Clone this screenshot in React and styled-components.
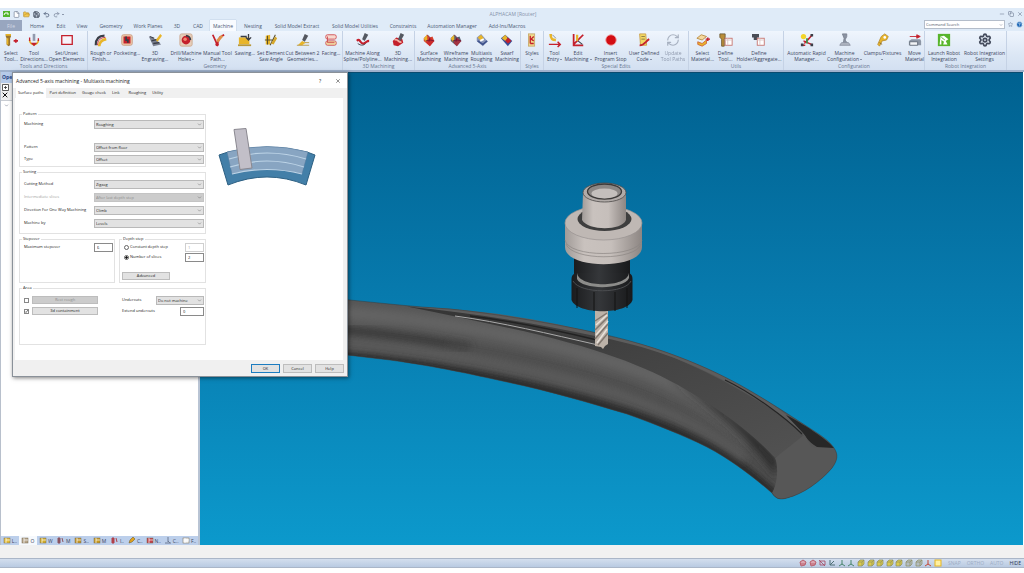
import React from 'react';
import styled, { createGlobalStyle } from 'styled-components';
import {
   ChevronDown, Undo2, Redo2, Save, File, FolderOpen, Settings, RefreshCw, X, Minus, Copy, CircleHelp, Star,
} from 'lucide-react';

const GlobalStyle = createGlobalStyle`
   * { box-sizing: border-box; }
   body {
      margin: 0;
      background: #ffffff;
      font-family: "Open Sans", "Noto Sans", sans-serif;
      font-size: 5px;
      line-height: 6px;
      color: #3c4660;
   }
   button, input, select { font: inherit; color: inherit; margin: 0; }
   svg { display: block; flex: none; }
`

const Window = styled.div`
   display: flex;
   flex-direction: column;
   min-height: 100vh;
   padding: 8px 0 5px;
   overflow: hidden;
`

/* ---------- title bar ---------- */

const TitleBar = styled.header`
   display: grid;
   grid-template-columns: 1fr auto 1fr;
   align-items: center;
   height: 12px;
   padding: 0 0 0 2px;
   background: #dfebf8;
   color: #8592aa;
`

const QuickAccess = styled.div`
   display: flex;
   align-items: center;
   gap: 2px;
`

const WindowButtons = styled.div`
   display: flex;
   justify-content: flex-end;
   gap: 1px;
`

const IconButton = styled.button`
   display: flex;
   align-items: center;
   justify-content: center;
   width: 8px;
   height: 8px;
   padding: 0;
   border: 0;
   background: none;
   color: ${p => p.$color || '#5d6b85'};
`

/* ---------- ribbon ---------- */

const TabRow = styled.nav`
   display: flex;
   height: 11px;
   padding-right: 1px;
   background: #dfebf8;
`

const RibbonTab = styled.button`
   width: ${p => p.$w}px;
   height: 11px;
   padding: 0;
   border: 0;
   white-space: nowrap;
   color: ${p => (p.$file ? '#d4dae6' : '#4a5873')};
   background: ${p => (p.$file ? '#98a6bf' : p.$active ? '#f8fbff' : 'transparent')};
   box-shadow: ${p => (p.$active ? '0 0 1px #8fa3c4' : 'none')};
`

const SearchArea = styled.div`
   display: flex;
   align-items: flex-start;
   gap: 1px;
   margin-left: auto;
`

const SearchBox = styled.label`
   display: flex;
   align-items: center;
   width: 81px;
   height: 9px;
   padding: 0 1px;
   border: 1px solid #b4bdca;
   background: #ffffff;
   font-size: 4px;
   input {
      flex: 1;
      min-width: 0;
      padding: 0;
      border: 0;
      outline: 0;
      background: none;
   }
   input::placeholder { color: #50586a; opacity: 1; }
`

const Ribbon = styled.section`
   display: flex;
   height: 39px;
   background: linear-gradient(#eff5fd, #dce7f5 60%, #d3e0f1);
`

const Group = styled.div`
   display: flex;
   flex-direction: column;
   border-right: 1px solid #c5d2e5;
`

const GroupButtons = styled.div`
   display: flex;
   flex: 1;
`

const GroupTitle = styled.div`
   height: 7px;
   text-align: center;
   color: #67768f;
`

const Tool = styled.button`
   display: flex;
   flex-direction: column;
   align-items: center;
   gap: 3px;
   width: ${p => p.$w}px;
   padding: 2px 0 0;
   border: 0;
   background: none;
   white-space: nowrap;
   opacity: ${p => (p.disabled ? 0.5 : 1)};
`

const ToolLabel = styled.span`
   display: flex;
   flex-direction: column;
   align-items: center;
   line-height: 6px;
`

const LastLine = styled.span`
   display: flex;
   align-items: center;
   gap: 1px;
   min-height: 6px;
`

const Caret = styled.i`
   border: 1px solid transparent;
   border-top-color: #3c4660;
   border-bottom: 0;
`

const RibbonEdge = styled.div`
   height: 2px;
   background: #9fb2cd;
`

/* ---------- workspace ---------- */

const Workspace = styled.main`
   position: relative;
   display: flex;
   flex: 1;
   min-height: 440px;
   padding-right: 1px;
`

const SidePanel = styled.aside`
   display: flex;
   flex-direction: column;
   width: 200px;
   border-left: 1px solid #b8c0cc;
   border-right: 2px solid #b9c4d4;
   background: #ffffff;
`

const PanelTitle = styled.h2`
   height: 11px;
   margin: 0;
   padding-left: 1px;
   background: #b6cbe9;
   color: #1c3f83;
   font-size: 5px;
   line-height: 11px;
`

const PanelTools = styled.div`
   display: flex;
   flex-direction: column;
   height: 18px;
   border-bottom: 1px solid #c8ccd2;
   background: #f0f0f0;
`

const Tree = styled.div`
   flex: 1;
   padding: 2px 3px;
`

const PanelTabs = styled.div`
   display: flex;
   height: 9px;
   background: #bccfeb;
`

const PanelTab = styled.button`
   display: flex;
   flex: 1;
   align-items: center;
   justify-content: center;
   gap: 1px;
   min-width: 0;
   padding: 0;
   border: 0;
   white-space: nowrap;
   background: ${p => (p.$active ? '#f6f9fd' : 'transparent')};
`

const Viewport = styled.div`
   flex: 1;
   min-width: 0;
   border-top: 1px solid #0a4c70;
   background: linear-gradient(#006190, #0779ac 45%, #0c99cc);
   svg { width: 100%; height: 100%; }
`

const CommandLine = styled.div`
   height: 13px;
   background: #f1f1f1;
`

const StatusBar = styled.footer`
   display: flex;
   align-items: center;
   justify-content: flex-end;
   gap: 6px;
   height: 10px;
   padding-right: 3px;
   border-top: 1px solid #aab6c8;
   border-bottom: 1px solid #aab6c8;
   background: linear-gradient(#d3deee, #b9cae2);
`

const StatusMarks = styled.div`
   display: flex;
   justify-content: space-between;
   width: 143px;
`

const Mode = styled.button`
   padding: 0;
   border: 0;
   background: none;
   color: ${p => (p.$on ? '#26344f' : '#9dacc4')};
`

/* ---------- dialog ---------- */

const Dialog = styled.section`
   position: absolute;
   top: 0;
   left: 12px;
   display: flex;
   flex-direction: column;
   width: 336px;
   border: 1px solid #8a9199;
   background: #f0f0f0;
   box-shadow: 1px 1px 4px rgba(0, 0, 0, 0.5);
   color: #222222;
   font-size: 4px;
`

const DialogTitle = styled.div`
   display: flex;
   align-items: center;
   height: 15px;
   padding: 0 0 0 3px;
   background: #ffffff;
   h1 {
      flex: 1;
      margin: 0;
      font-size: 5px;
      font-weight: 400;
   }
   button {
      width: 18px;
      font-size: 5px;
   }
`

const DialogTabs = styled.div`
   display: flex;
   gap: 2px;
   height: 10px;
   padding-left: 3px;
`

const DialogTab = styled.button`
   height: 10px;
   padding: 0 2px;
   border: 0;
   margin-left: ${p => (p.$apart ? 3 : 0)}px;
   background: ${p => (p.$active ? '#ffffff' : 'none')};
`

const DialogBody = styled.div`
   display: flex;
   gap: 12px;
   margin: 0 4px 0 2px;
   padding: 13px 4px 15px;
   background: #ffffff;
`

const Form = styled.form`
   display: flex;
   flex-direction: column;
   gap: 2px;
   width: 187px;
`

const Box = styled.fieldset`
   flex: ${p => p.$grow || '0 0 auto'};
   min-width: 0;
   height: ${p => p.$h}px;
   margin: 0;
   padding: ${p => p.$top || 0}px 1px 0 2px;
   border: 1px solid #e2e2e2;
   legend {
      height: 6px;
      padding: 0 1px;
   }
`

const Row = styled.div`
   display: flex;
   align-items: center;
   height: 10px;
   padding-left: 2px;
   margin-bottom: ${p => p.$gap || 0}px;
   color: ${p => (p.$off ? '#a2a2a2' : 'inherit')};
   label { flex: 1; white-space: nowrap; }
`

const SelectWrap = styled.span`
   position: relative;
   width: ${p => p.$w || 110}px;
   height: 9px;
   select {
      appearance: none;
      display: block;
      width: 100%;
      height: 9px;
      padding: 0 8px 0 1px;
      border: 1px solid ${p => (p.$off ? '#c4c4c4' : '#b9b9b9')};
      border-radius: 0;
      background: ${p => (p.$off ? '#cccccc' : '#e2e2e2')};
      color: ${p => (p.$off ? '#8c8c8c' : 'inherit')};
      line-height: 7px;
      opacity: 1;
   }
   svg {
      position: absolute;
      top: 2px;
      right: 2px;
      pointer-events: none;
   }
`

const NumberBox = styled.input`
   width: ${p => p.$w || 19}px;
   height: 9px;
   padding: 0 2px;
   border: 1px solid ${p => (p.disabled ? '#cfcfcf' : '#8a8a8a')};
   background: #ffffff;
   color: ${p => (p.disabled ? '#9a9a9a' : 'inherit')};
`

const Radio = styled.input`
   appearance: none;
   width: 5px;
   height: 5px;
   border: 1px solid #666666;
   border-radius: 50%;
   background: #ffffff;
   &:checked { background: radial-gradient(circle, #111111 45%, #ffffff 60%); }
   && { margin: 0 1px 0 0; }
`

const CheckWrap = styled.span`
   position: relative;
   display: flex;
   margin-right: 3px;
   input {
      appearance: none;
      width: 5px;
      height: 5px;
      border: 1px solid #888888;
      background: #ffffff;
   }
   svg { position: absolute; inset: 0; pointer-events: none; }
`

const PushButton = styled.button`
   width: ${p => p.$w || 29}px;
   height: ${p => p.$h || 8}px;
   padding: 0;
   border: 1px solid ${p => (p.$primary ? '#1c7cc0' : '#bdbdbd')};
   background: ${p => (p.disabled ? '#cccccc' : '#e2e2e2')};
   color: ${p => (p.disabled ? '#8f8f8f' : 'inherit')};
   line-height: 6px;
`

const Pair = styled.div`
   display: flex;
   gap: 4px;
`

const AreaGrid = styled.div`
   display: grid;
   grid-template-columns: 98px 1fr;
   row-gap: 1px;
`

const DialogFooter = styled.div`
   display: flex;
   justify-content: flex-end;
   gap: 3px;
   padding: 4px 3px 3px 0;
`

/* ---------- ribbon pictures ---------- */

const red = '#c4202c'
const gold = '#e8b52a'
const ink = '#3a3d46'

const cube = accent => (
   <>
      <path d="M2 6l4-4 3 3 3-1 2 5-5 6-7-6z" fill={accent} />
      <path d="M2 6l4-4v6l-2 2z" fill={gold} />
      <path d="M9 5l5 4-5 6-4-4z" fill={red} fillOpacity="0.7" />
      <path d="M6 2l3 3-1 5M4 9l5-1 5 1" stroke="#613" strokeWidth="0.8" fill="none" />
   </>
)

const art = {
   select: <><path d="M2 1h6v3L7 6v8l-2 1-2-2V6L2 4z" fill="#9b742d" /><path d="M2 2h6M4 6v7" stroke={gold} strokeWidth="2" /><path d="M11 9h5M13.500 7v4" stroke={red} strokeWidth="2" /></>,
   direction: <><path d="M8 1v8" stroke="#929aae" strokeWidth="3" /><path d="M3 8c0 7 10 7 10 0" stroke={gold} strokeWidth="2" fill="none" /><path d="M3 5v4M8 14l-2-2h4zM13 6v3" stroke={red} strokeWidth="1.500" fill={red} /></>,
   rect: <path d="M2 3h12v10H2z" stroke={red} strokeWidth="1.500" fill="#f6f3fa" />,
   rough: <><path d="M2 14C2 6 6 3 12 3" stroke={ink} strokeWidth="2.500" fill="none" /><path d="M6 15c0-5 3-7 8-8" stroke={gold} strokeWidth="3" fill="none" /><path d="M4 14C4 8 8 5 13 5" stroke={red} strokeWidth="1" fill="none" /></>,
   pocket: <><rect x="2" y="2" width="12" height="12" rx="2" fill="#efc9a9" stroke="#c99a80" /><rect x="4" y="4" width="8" height="8" fill={red} /><path d="M7 4v4h2v3" stroke={ink} strokeWidth="2" fill="none" /></>,
   engrave: <><path d="M1 4l8 3 6 6-9 2z" fill="#7c8292" /><path d="M2 4l5 2M4 9l8-2M6 12l7-1" stroke={ink} strokeWidth="1.500" /><path d="M9 8l5-7 2 2-5 7z" fill={gold} /></>,
   drill: <><rect x="1" y="1" width="14" height="14" rx="2" fill="#e6cdb9" stroke="#cba88f" /><circle cx="8" cy="8" r="5" fill={red} /><circle cx="7" cy="7" r="2" fill="#f0866e" /><path d="M8 3a5 5 0 015 5" stroke={ink} strokeWidth="2" fill="none" /></>,
   manual: <><path d="M2 2l5 11 3-8 5-3" stroke={red} strokeWidth="2" fill="none" /><path d="M6 8l6-6 2 2-6 7z" fill="#e0904a" /><circle cx="7" cy="13" r="2" fill={red} /></>,
   saw: <><path d="M1 5h12v8H1z" fill={gold} /><path d="M0 14h15" stroke="#b8983a" strokeWidth="2" /><path d="M3 4h7M12 1v6M9 5l3 3 3-3" stroke={ink} strokeWidth="1.500" fill="none" /></>,
   angle: <><path d="M2 3l5-1v11H2z" fill={gold} /><path d="M4 3v10M1 8h12M7 14l6-12" stroke="#5b502b" strokeWidth="1.200" /><path d="M8 12l5-8 2 2-4 7z" fill="#d6a82c" /></>,
   cut: <><path d="M10 1l4 2-4 7-3-2z" fill="#54575f" /><path d="M2 14l5-5 4 2-4 3z" fill={gold} /><path d="M1 14h14M10 11h5" stroke="#b69542" /></>,
   facing: <><rect x="2" y="2" width="12" height="5" rx="2" fill="#f7d8ce" stroke="#cf4a50" /><rect x="2" y="9" width="12" height="5" rx="2" fill="#f0dfa6" stroke="#cf4a50" /><path d="M4 4v7h8" stroke="#cf4a50" fill="none" /></>,
   spline: <><path d="M10 0l4 2-4 7-3-2z" fill="#555962" /><path d="M1 9c4-4 4 5 8 3s3-3 6-3" stroke={red} strokeWidth="2.500" fill="none" /><path d="M2 12c4 3 7 2 9 0" stroke={ink} fill="none" /></>,
   machining3d: <><path d="M2 9l4-4 7 2 1 4-6 4-5-1z" fill={red} /><path d="M4 8c4-2 5 4 8 2" stroke="#f4b0a2" strokeWidth="2" fill="none" /><path d="M11 0l4 2-4 7-3-2z" fill="#555962" /></>,
   surface: cube('#d9432c'),
   wire: cube('#56606f'),
   multi: <><path d="M2 5l5-4 7 8-5 6-7-6z" fill="#8794b8" /><path d="M3 5l4-3 3 4-3 3z" fill={gold} /><path d="M3 9l6 4 5-4" stroke="#3f538d" strokeWidth="2" fill="none" /><path d="M6 9l4-2" stroke="#fff" strokeWidth="2" /></>,
   swarf: <><path d="M1 6l5-4 8 7-5 6z" fill="#374c96" /><path d="M2 6l4-4 3 4-3 3z" fill={gold} /><path d="M6 9l3-4 4 4-4 3z" fill={red} /></>,
   styles: <><rect x="4" y="1" width="7" height="14" fill="#f1dc8c" stroke="#c7a96c" /><path d="M6 3v9M10 4l-3 3 3 2M6 12h4" stroke={red} strokeWidth="1.500" fill="none" /></>,
   entry: <><path d="M3 1c0 6 2 7 6 7" stroke={gold} strokeWidth="3" fill="none" /><path d="M1 13h13M11 10l3 3-3 3" stroke={red} strokeWidth="1.700" fill="none" /><path d="M5 2l4 4" stroke="#808390" /></>,
   edit: <><path d="M3 1v13h11M3 13L14 2" stroke={red} strokeWidth="2" fill="none" /><path d="M7 2v7" stroke={gold} strokeWidth="2.500" /><path d="M8 9l5 4" stroke={ink} strokeWidth="1.200" /></>,
   stop: <circle cx="8" cy="8" r="6" fill="#d30d13" stroke="#ef9a9c" />,
   code: <><path d="M3 1h7l1 13H4z" fill="#f2d763" stroke="#caa048" /><path d="M5 4h4M5 7h4" stroke="#857646" /><path d="M3 14c6 0 7-5 11-7" stroke={red} strokeWidth="2" fill="none" /></>,
   material: <><path d="M1 6l5-4 6 2-5 4z" fill="#f5d9a0" stroke="#b7893e" /><path d="M2 10l5 2 5-4v4l-5 3-5-2z" fill={gold} stroke="#d0653a" /><path d="M11 7h5M13.500 5v4" stroke={red} strokeWidth="1.700" /></>,
   defTool: <><path d="M1 1h6v4L6 7v8H3V7L1 5z" fill="#b98d39" stroke="#6f5d36" /><rect x="7" y="6" width="8" height="8" fill="#fff" stroke="#c4706b" /><path d="M7 8h8M10 6v8" stroke="#dcc3c3" /></>,
   defHolder: <><path d="M0 1h8v4H6v3H2V5H0z" fill="#4a4d56" /><rect x="6" y="6" width="8" height="8" fill="#fff" stroke="#c4706b" /><path d="M6 8h8M9 6v8" stroke="#dcc3c3" /></>,
   rapid: <><circle cx="4" cy="4" r="3" fill="#f3d52b" /><path d="M5 12l8-9M3 14h3M4 9l9 4M9 8l5-6" stroke={red} strokeWidth="1.500" /><path d="M12 1h3v3h-3zM12 12h3v3h-3zM1 12h3v3H1z" fill={ink} /><path d="M8 6v6" stroke="#3b924b" strokeWidth="2" /></>,
   machine: <><path d="M5 1h5v3L8 8l3 4H6l1-6z" fill="#8b93a2" stroke="#7a8190" /><path d="M2 14h12l-2-3H4z" fill="#b1b7c2" stroke="#8a91a0" /></>,
   clamp: <><path d="M10 1l4 3-2 4-5 1-3 6-2-2 4-9z" fill={gold} stroke="#b98f36" /><circle cx="10" cy="5" r="1.500" fill="#fff" /><path d="M4 11l3 2" stroke="#7d6226" /></>,
   move: <><path d="M2 4h9M10 2l4 2-4 2z" stroke={red} fill={red} /><path d="M1 9l3-2h10l1 2v5H1z" fill="#8d96a5" /><path d="M2 10h9v4H2z" fill="#f2f4f7" stroke="#606978" /></>,
   launch: <><rect x="1" y="1" width="14" height="14" fill="#58b52c" /><path d="M4 4l4-1 5 4-3 2 2 4H7l1-3-3-2v5H3z" fill="#fff" /><path d="M5 5l4 3" stroke="#58b52c" /></>,
}

const ribbonTabs = [
   ['File', 22], ['Home', 30], ['Edit', 18], ['View', 24], ['Geometry', 34], ['Work Planes', 40], ['3D', 18],
   ['CAD', 24], ['Machine', 26], ['Nesting', 34], ['Solid Model Extract', 54], ['Solid Model Utilities', 62],
   ['Constraints', 34], ['Automation Manager', 64], ['Add-Ins/Macros', 46],
]

// [first line, second line, width, picture, drop-down?, disabled?]
const ribbonGroups = [
   ['Tools and Directions', [
      ['Select', 'Tool...', 22, 'select'], ['Tool', 'Directions...', 24, 'direction'], ['Set/Unset', 'Open Elements', 41, 'rect'],
   ]],
   ['Geometry', [
      ['Rough or', 'Finish...', 26, 'rough'], ['Pocketing...', '', 26, 'pocket'], ['3D', 'Engraving...', 30, 'engrave'],
      ['Drill/Machine', 'Holes', 32, 'drill', true], ['Manual Tool', 'Path...', 31, 'manual'], ['Sawing...', '', 24, 'saw'],
      ['Set Element', 'Saw Angle', 28, 'angle'], ['Cut Between 2', 'Geometries...', 35, 'cut'], ['Facing...', '', 22, 'facing'],
   ]],
   ['3D Machining', [['Machine Along', 'Spline/Polyline...', 39, 'spline'], ['3D', 'Machining...', 32, 'machining3d']]],
   ['Advanced 5-Axis', [
      ['Surface', 'Machining', 28, 'surface'], ['Wireframe', 'Machining', 26, 'wire'], ['Multiaxis', 'Roughing', 25, 'multi'],
      ['Swarf', 'Machining', 26, 'swarf'],
   ]],
   ['Styles', [['Styles', '', 22, 'styles', true]]],
   ['Special Edits', [
      ['Tool', 'Entry', 21, 'entry', true], ['Edit', 'Machining', 26, 'edit', true], ['Insert', 'Program Stop', 39, 'stop'],
      ['User Defined', 'Code', 28, 'code', true], ['Update', 'Tool Paths', 30, 'update', false, true],
   ]],
   ['Utils', [['Select', 'Material...', 27, 'material'], ['Define', 'Tool...', 19, 'defTool'], ['Define', 'Holder/Aggregate...', 48, 'defHolder']]],
   ['Configuration', [
      ['Automatic Rapid', 'Manager...', 45, 'rapid'], ['Machine', 'Configuration', 31, 'machine', true],
      ['Clamps/Fixtures', '', 45, 'clamp', true], ['Move', 'Material', 19, 'move'],
   ]],
   ['Robot Integration', [['Launch Robot', 'Integration', 38, 'launch'], ['Robot Integration', 'Settings', 43, 'gears']]],
]

function ToolArt({ name }) {
   if (name === 'update') return <RefreshCw size={14} color="#687387" />
   if (name === 'gears') return <Settings size={14} color="#444b5c" strokeWidth={3} />
   return <svg width="14" height="14" viewBox="0 0 16 16" overflow="visible">{art[name]}</svg>
}

function RibbonBar() {
   return (
      <>
         <TabRow>
            {ribbonTabs.map(([name, w]) => (
               <RibbonTab key={name} $w={w} $file={name === 'File'} $active={name === 'Machine'}>{name}</RibbonTab>
            ))}
            <SearchArea>
               <SearchBox>
                  <input placeholder="Command Search" aria-label="Command Search" />
                  <ChevronDown size={4} />
               </SearchBox>
               <IconButton aria-label="Options"><Star size={5} /></IconButton>
               <IconButton aria-label="Help" $color="#ffffff"><CircleHelp size={7} fill="#1d68b8" /></IconButton>
            </SearchArea>
         </TabRow>
         <Ribbon>
            {ribbonGroups.map(([title, tools]) => (
               <Group key={title}>
                  <GroupButtons>
                     {tools.map(([first, second, w, pic, drop, off]) => (
                        <Tool key={pic} $w={w} disabled={off}>
                           <ToolArt name={pic} />
                           <ToolLabel>
                              <span>{first}</span>
                              <LastLine>{second}{drop && <Caret />}</LastLine>
                           </ToolLabel>
                        </Tool>
                     ))}
                  </GroupButtons>
                  <GroupTitle>{title}</GroupTitle>
               </Group>
            ))}
         </Ribbon>
         <RibbonEdge />
      </>
   )
}

/* ---------- 3D scene ---------- */

const body = 'M330 298C370 302 415 307 450 309C500 314 560 325 595 332.500C650 344 700 363 740 385C765 399 788 414 817 433C828 440 832 445 834 448C839 455 837 461 832 468C820 482 803 494 787 498C780 500 776 499 772 493C755 478 730 459 707 447C685 436 655 424 627 414C590 403 550 391 507 382C470 374 440 367 390 360L330 353Z'

function Scene() {
   return (
      <svg viewBox="200 73 823 472" preserveAspectRatio="xMinYMin slice" role="img" aria-label="Workpiece and cutter">
         <defs>
            <clipPath id="bodyClip"><path d={body} /></clipPath>
            <filter id="soft" x="-10%" y="-20%" width="120%" height="140%"><feGaussianBlur stdDeviation="4" /></filter>
            <linearGradient id="steel">
               <stop offset="0" stopColor="#a19b98" /><stop offset="0.250" stopColor="#c9c2be" />
               <stop offset="0.600" stopColor="#c6bfbb" /><stop offset="1" stopColor="#8d8683" />
            </linearGradient>
            <linearGradient id="nut">
               <stop offset="0" stopColor="#1b1c1e" /><stop offset="0.450" stopColor="#35373a" /><stop offset="1" stopColor="#18191b" />
            </linearGradient>
            <linearGradient id="groove" x1="0" y1="0" x2="1" y2="1">
               <stop offset="0" stopColor="#343434" /><stop offset="0.500" stopColor="#444444" /><stop offset="1" stopColor="#525252" />
            </linearGradient>
         </defs>

         <path d={body} fill="#555555" />
         <g clipPath="url(#bodyClip)" fill="none">
            <path d="M330 355C440 365 540 386 627 413C700 436 750 466 784 506" stroke="#242424" strokeWidth="10" filter="url(#soft)" />
            <path d="M330 329C370 331 420 339 470 348" stroke="#363636" strokeWidth="8" filter="url(#soft)" />
            <path d="M450 345C490 351 520 357 560 367C640 386 715 424 775 478" stroke="#4a4a4a" strokeWidth="6" filter="url(#soft)" />
            <path d="M330 312C440 319 540 339 620 364C690 387 722 408 752 440" stroke="#646464" strokeWidth="14" filter="url(#soft)" />
            <path d="M330 343C420 348 510 365 590 386C660 406 710 430 745 458" stroke="#5b5b5b" strokeWidth="7" filter="url(#soft)" />
            <path d="M670 378C710 398 750 425 778 460L777 478C755 446 725 415 670 378Z" fill="#2a2a2a" filter="url(#soft)" />
         </g>
         <path d="M407 306.500C470 310 540 321 607 336C680 354 735 386 773 410C790 421 798 429 805 436L775 458C752 433 725 414 700 398C660 373 620 355 540 335C500 326 455 316 407 306.500Z" fill="url(#groove)" />
         <path d="M407 306.500C470 308 540 318 607 336C680 350 740 383 773 405C785 413 800 425 805 436C780 411 740 389 723 380C680 357 640 345 595 336C530 322 470 313 407 306.500Z" fill="#5d5d5d" />
         <path d="M725 380C752 393 785 417 802 434" stroke="#252525" strokeWidth="1.200" fill="none" />
         <path d="M455 316C500 322 550 334 598 345" stroke="#aaa" strokeWidth="1" fill="none" />
         <path d="M470 316C520 322 560 331 597 340" stroke="#222" strokeWidth="1.300" fill="none" />
         <path d="M786 415C802 423 827 439 834 448L817 447C807 441 806 436 803 433Z" fill="#272727" />
         <path d="M775 458L804 435C808 438 808 447 817 448L833 448C839 455 837 461 832 468C820 482 803 494 787 498C780 500 776 499 772 493C777 485 779 468 775 458Z" fill="#575757" />
         <path d={body} fill="none" stroke="#3c3c3c" strokeWidth="0.500" />

         {/* cutter */}
         <path d="M595 308h13v36l-3 2-2 3-2-2-6-1z" fill="#bcb2a8" />
         <path d="M595 321l12-8M595 330l13-13M595 339l13-15M598 345l10-12" stroke="#81776f" strokeWidth="1.500" />
         <path d="M596 325l11-10M596 335l12-14M597 343l10-14" stroke="#e9e2da" strokeWidth="1.500" />

         {/* holder */}
         <path d="M574 254H630V280H574Z" fill="url(#nut)" />
         <path d="M571.500 279C571.500 273 577 273 577 273H628C628 273 632.500 273 632.500 279V300C628 315 577 315 571.500 300Z" fill="url(#nut)" />
         <path d="M577 288v20M594 292v19M615 292v19M627 288v20" stroke="#131313" strokeWidth="1" />
         <path d="M573 281C580 294 625 294 631 281" stroke="#4b4d50" fill="none" />
         <path d="M577 273C579 288 627 288 629 273V278C624 290 582 290 577 279Z" fill="#8c8c8a" />
         <path d="M565 223V247C565 270 642 270 642 247V223Z" fill="url(#steel)" />
         <path d="M565 240C568 258 638 258 642 240M566 244C572 261 636 261 641 244" stroke="#8b8582" strokeWidth="0.700" fill="none" />
         <ellipse cx="603.500" cy="223" rx="38.500" ry="17" fill="#bfb8b4" stroke="#989290" strokeWidth="0.700" />
         <ellipse cx="604.500" cy="219" rx="27" ry="12" fill="#3e3e3e" />
         <path d="M583 193H626V220C622 231 588 231 582 220Z" fill="url(#steel)" />
         <ellipse cx="604.500" cy="192.500" rx="21.500" ry="9.500" fill="#b1aba8" stroke="#4b4948" strokeWidth="0.800" />
         <ellipse cx="604.500" cy="191.500" rx="17" ry="7.500" fill="#8b8785" stroke="#3c3a39" strokeWidth="1.300" />
         <ellipse cx="604.500" cy="193.500" rx="13" ry="5" fill="#c4bfbc" />
      </svg>
   )
}

/* ---------- dialog ---------- */

function Pick({ id, label, value, gap, off }) {
   return (
      <Row $gap={gap} $off={off}>
         <label htmlFor={id}>{label}</label>
         <SelectWrap $off={off}>
            <select id={id} disabled={off}><option>{value}</option></select>
            <ChevronDown size={5} color="#555555" />
         </SelectWrap>
      </Row>
   )
}

const Preview = styled.svg`
   margin-top: 16px;
`

function SlicePreview() {
   return (
      <Preview width="98" height="60" viewBox="218 127 98 60">
         <path d="M219 155L228 152Q267 142 307 152L315 155L306 185Q267 169 228 185Z" fill="#437fa8" stroke="#2d6083" />
         <path d="M227 152Q267 141 308 152L302 174Q267 165 232 174Z" fill="#88a5c2" stroke="#577b9e" strokeWidth="0.500" />
         <path d="M229 159Q267 147 306 159M230 167Q267 155 304 167M232 174Q267 165 302 174" stroke="#bdd4e7" strokeWidth="1.200" fill="none" />
         <path d="M234 129.500L246 128.500L252 168L240 169.500Z" fill="#c2bfc8" stroke="#8a8890" />
      </Preview>
   )
}

function MachiningDialog() {
   return (
      <Dialog role="dialog" aria-labelledby="dialog-title">
         <DialogTitle>
            <h1 id="dialog-title">Advanced 5-axis machining - Multiaxis machining</h1>
            <IconButton $color="#222222">?</IconButton>
            <IconButton $color="#222222" aria-label="Close"><X size={6} /></IconButton>
         </DialogTitle>
         <DialogTabs>
            {['Surface paths', 'Part definition', 'Gouge check', 'Link', 'Roughing', 'Utility'].map((t, i) => (
               <DialogTab key={t} $active={i === 0} $apart={t === 'Roughing'}>{t}</DialogTab>
            ))}
         </DialogTabs>
         <DialogBody>
            <Form>
               <Box $h={56} $top={2}>
                  <legend>Pattern</legend>
                  <Pick id="machining" label="Machining" value="Roughing" gap={13} />
                  <Pick id="pattern" label="Pattern" value="Offset from floor" gap={2} />
                  <Pick id="type" label="Type" value="Offset" />
               </Box>
               <Box $h={65} $top={4}>
                  <legend>Sorting</legend>
                  <Pick id="cutting" label="Cutting Method" value="Zigzag" gap={3} />
                  <Pick id="slices" label="Intermediate slices" value="After last depth step" gap={3} off />
                  <Pick id="oneway" label="Direction For One Way Machining" value="Climb" gap={3} />
                  <Pick id="machineby" label="Machine by" value="Levels" />
               </Box>
               <Pair>
                  <Box $h={47} $grow="0 0 96px">
                     <legend>Stepover</legend>
                     <Row>
                        <label htmlFor="stepover">Maximum stepover</label>
                        <NumberBox id="stepover" defaultValue="6" />
                     </Row>
                  </Box>
                  <Box $h={47} $grow="1">
                     <legend>Depth step</legend>
                     <Row>
                        <Radio type="radio" name="depth" id="constant" />
                        <label htmlFor="constant">Constant depth step</label>
                        <NumberBox aria-label="Constant depth step" defaultValue="1" disabled />
                     </Row>
                     <Row $gap={10}>
                        <Radio type="radio" name="depth" id="number" defaultChecked />
                        <label htmlFor="number">Number of slices</label>
                        <NumberBox aria-label="Number of slices" defaultValue="2" />
                     </Row>
                     <PushButton type="button" $w={48}>Advanced</PushButton>
                  </Box>
               </Pair>
               <Box $h={60} $top={4}>
                  <legend>Area</legend>
                  <AreaGrid>
                     <Row>
                        <CheckWrap><input type="checkbox" aria-label="Use rest rough" /></CheckWrap>
                        <PushButton type="button" $w={66} disabled>Rest rough</PushButton>
                     </Row>
                     <Row>
                        <label htmlFor="undercuts">Undercuts</label>
                        <SelectWrap $w={48}>
                           <select id="undercuts"><option>Do not machine</option></select>
                           <ChevronDown size={5} color="#555555" />
                        </SelectWrap>
                     </Row>
                     <Row>
                        <CheckWrap>
                           <input type="checkbox" defaultChecked aria-label="Use 3d containment" />
                           <svg width="5" height="5" viewBox="0 0 5 5"><path d="M1 2.500l1 1 2-2.500" stroke="#333" strokeWidth="0.700" fill="none" /></svg>
                        </CheckWrap>
                        <PushButton type="button" $w={66}>3d containment</PushButton>
                     </Row>
                     <Row>
                        <label htmlFor="extend">Extend undercuts</label>
                        <NumberBox id="extend" $w={24} defaultValue="0" />
                     </Row>
                  </AreaGrid>
               </Box>
            </Form>
            <SlicePreview />
         </DialogBody>
         <DialogFooter>
            <PushButton $primary $h={9}>OK</PushButton>
            <PushButton $h={9}>Cancel</PushButton>
            <PushButton $h={9}>Help</PushButton>
         </DialogFooter>
      </Dialog>
   )
}

/* ---------- bottom strips ---------- */

const panelTabs = [
   ['L..', '#e5bd37'], ['O', '#b6a58b'], ['W', '#d2ad28'], ['M', '#8b5561'], ['S..', '#c49728'], ['M', '#c89b20'],
   ['I..', '#b0414a'], ['C..', '#e0a21e'], ['N..', '#c43f48'], ['C..', '#6d7b95'], ['F..', '#f5f6f8'],
]

function TabMark({ n, color }) {
   return (
      <svg width="8" height="7" viewBox="0 0 8 7">
         {n === 7 && <path d="M1 6l1-3 3-3 2 2-3 3z" fill={color} stroke="#665321" strokeWidth="0.500" />}
         {n === 9 && <path d="M4 0v5M1 6h6M4 4l2 2" stroke={color} />}
         {(n === 3 || n === 6) && <path d="M1 1h2v5H1zM5 1l1 4" fill={color} stroke={color} />}
         {![3, 6, 7, 9].includes(n) && <><rect x="1" y="1" width="6" height="5" fill={color} stroke="#75684f" strokeWidth="0.500" /><path d="M3 1v5M3 3h4" stroke="#fff" strokeWidth="0.700" /></>}
      </svg>
   )
}

const statusMarks = ['rot', 'rot', 'cross', 'axis', 'tri', 'tri', 'box', 'box', 'box', 'box', 'box', 'grey', 'grey', 'red', 'sun']

function StatusMark({ kind }) {
   return (
      <svg width="8" height="8" viewBox="0 0 8 8">
         {kind === 'rot' && <path d="M1 3l3-2 3 2-1 3-4 1zM1 5h5" stroke="#b9606e" fill="#dba6b1" />}
         {kind === 'cross' && <path d="M1 1l6 6M7 2v4H2V2z" stroke="#a5455d" strokeWidth="0.800" fill="none" />}
         {kind === 'axis' && <path d="M2 1v5h5M2 6l4-4" stroke="#4f6f76" fill="none" />}
         {kind === 'tri' && <path d="M4 1v4L1 7M4 5l3 2" stroke="#48846b" fill="none" />}
         {kind === 'red' && <path d="M4 1v4L1 7M4 5l3 2" stroke="#c44733" fill="none" />}
         {(kind === 'box' || kind === 'grey') && <path d="M1 3l2-2h4v4L5 7H1zM1 3h4v4M5 3l2-2" fill={kind === 'box' ? '#dccb4c' : '#b5bdc2'} stroke="#8a8c60" strokeWidth="0.700" />}
         {kind === 'sun' && <rect x="1" y="1" width="6" height="6" fill="#fff0a0" stroke="#e6b522" />}
      </svg>
   )
}

function App() {
   return (
      <Window>
         <GlobalStyle />
         <TitleBar>
            <QuickAccess>
               <IconButton aria-label="Alphacam"><svg width="7" height="6" viewBox="0 0 7 6"><rect width="7" height="6" fill="#53b52c" /><path d="M1 4l1-2h3v2" stroke="#fff" fill="none" /></svg></IconButton>
               <IconButton aria-label="New"><File size={7} fill="#ffffff" /></IconButton>
               <IconButton aria-label="Open" $color="#b58622"><FolderOpen size={7} fill="#f3c94f" /></IconButton>
               <IconButton aria-label="Save" $color="#2d3648"><Save size={7} strokeWidth={3} /></IconButton>
               <IconButton aria-label="Undo"><Undo2 size={7} strokeWidth={3} /></IconButton>
               <IconButton aria-label="Redo" $color="#8793a8"><Redo2 size={7} strokeWidth={3} /></IconButton>
               <Caret />
            </QuickAccess>
            <span>ALPHACAM [Router]</span>
            <WindowButtons>
               <IconButton aria-label="Minimize"><Minus size={6} /></IconButton>
               <IconButton aria-label="Restore"><Copy size={6} /></IconButton>
               <IconButton aria-label="Close"><X size={6} /></IconButton>
            </WindowButtons>
         </TitleBar>
         <RibbonBar />
         <Workspace>
            <SidePanel>
               <PanelTitle>Ope</PanelTitle>
               <PanelTools>
                  <IconButton aria-label="Expand" $color="#111111"><svg width="7" height="7" viewBox="0 0 7 7"><path d="M.5.5h6v6h-6zM2 3.500h3M3.500 2v3" stroke="#333" strokeWidth="0.800" fill="#fff" /></svg></IconButton>
                  <IconButton aria-label="Delete" $color="#111111"><X size={8} strokeWidth={3} /></IconButton>
               </PanelTools>
               <Tree><ChevronDown size={5} /></Tree>
               <PanelTabs>
                  {panelTabs.map(([name, color], i) => (
                     <PanelTab key={i} $active={i === 1}><TabMark n={i} color={color} />{name}</PanelTab>
                  ))}
               </PanelTabs>
            </SidePanel>
            <Viewport><Scene /></Viewport>
            <MachiningDialog />
         </Workspace>
         <CommandLine />
         <StatusBar>
            <StatusMarks>{statusMarks.map((kind, i) => <StatusMark key={i} kind={kind} />)}</StatusMarks>
            <Mode>SNAP</Mode>
            <Mode>ORTHO</Mode>
            <Mode>AUTO</Mode>
            <Mode $on>HIDE</Mode>
         </StatusBar>
      </Window>
   )
}

export default App;
